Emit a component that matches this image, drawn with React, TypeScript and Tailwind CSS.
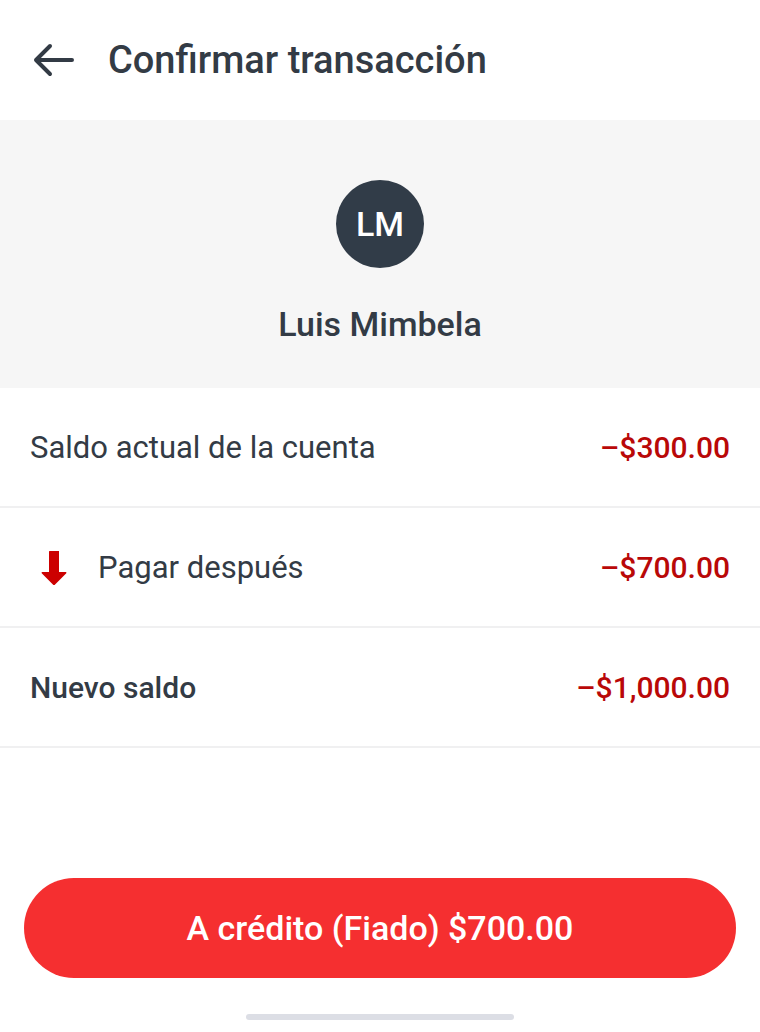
const ink = "text-[#333b45]";

type RowProps = { label: string; amount: string; charge?: boolean; strong?: boolean };

function Row({ label, amount, charge, strong }: RowProps) {
  return (
    <div className="flex h-[120px] items-center justify-between border-b-2 border-[#f0f0f1] px-[30px] pt-[2px]">
      <dt className={`flex items-center ${ink} ${strong ? "text-[30px] font-medium" : "text-[31px]"}`}>
        {charge && (
          <svg className="mr-5 h-12 w-12" viewBox="0 0 48 48" fill="#cc0000" aria-hidden="true">
            <path d="M19.500 7h9.500v21h7.300v1.200L24.600 41h-1.200L11.700 29.200V28h7.300V7.500z" />
          </svg>
        )}
        {label}
      </dt>
      <dd className="text-[30px] font-medium text-[#b90808]">{amount}</dd>
    </div>
  );
}

export default function App() {
  return (
    <main className="flex min-h-screen flex-col bg-white font-['Roboto',sans-serif] leading-10">
      <header className="flex h-[120px] items-center px-[30px]">
        <button type="button" aria-label="Volver" className="mr-[30px] h-12 w-12">
          <svg viewBox="0 0 48 48" fill="none" stroke="#333b45" strokeWidth="4" strokeLinecap="round" strokeLinejoin="round">
            <path d="M42 24H6M20 10 6 24l14 14" />
          </svg>
        </button>
        <h1 className={`text-[38px] font-medium ${ink}`}>Confirmar transacción</h1>
      </header>
      <section className="flex h-[268px] flex-col items-center bg-[#f6f6f6] pt-[60px]">
        <div className="flex h-[88px] w-[88px] items-center justify-center rounded-full bg-[#313c48] text-[34px] font-medium text-white">
          LM
        </div>
        <h2 className={`mt-9 text-[34px] font-medium ${ink}`}>Luis Mimbela</h2>
      </section>
      <dl>
        <Row label="Saldo actual de la cuenta" amount="–$300.00" />
        <Row label="Pagar después" amount="–$700.00" charge />
        <Row label="Nuevo saldo" amount="–$1,000.00" strong />
      </dl>
      <footer className="mt-auto flex flex-col items-center px-6 pb-3">
        <button type="button" className="h-[100px] w-full rounded-full bg-[#f52f30] text-[34px] font-medium text-white">
          A crédito (Fiado) $700.00
        </button>
        <div className="mt-9 h-[6px] w-[268px] rounded-full bg-[#dcdee5]" />
      </footer>
    </main>
  );
}
